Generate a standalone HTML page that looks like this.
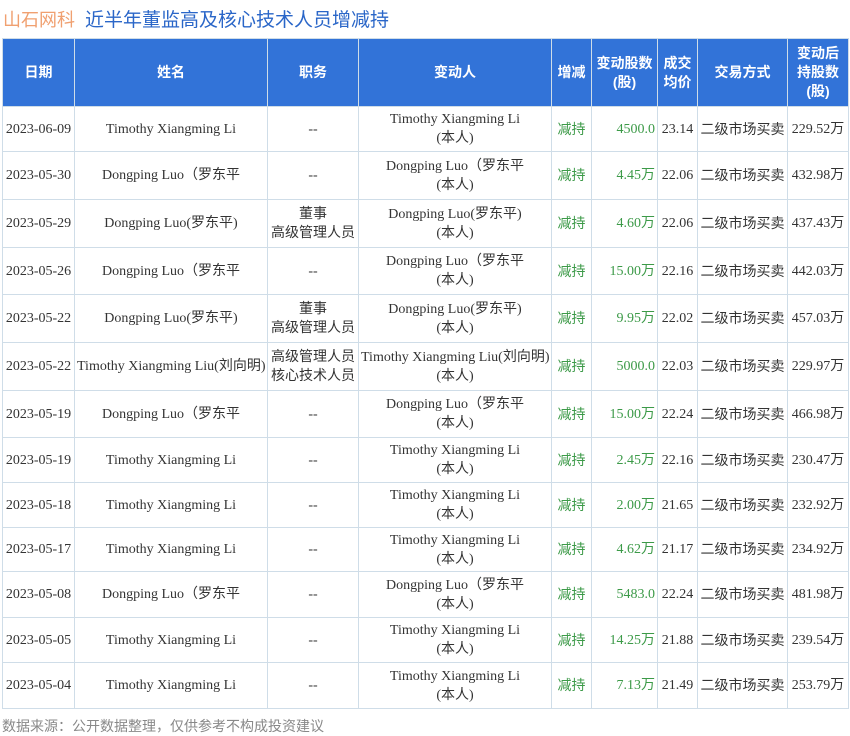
<!DOCTYPE html>
<html><head><meta charset="utf-8"><style>
*{margin:0;padding:0;box-sizing:border-box}
body{width:850px;height:735px;background:#fff;position:relative;overflow:hidden;font-family:"Liberation Serif","Noto Sans CJK SC",serif;color:#333}
.title{position:absolute;left:3px;top:5px;font:19px "Liberation Sans","Noto Sans CJK SC",sans-serif;white-space:nowrap;letter-spacing:0}
.title .a{color:#f0a070;font-size:18px}.title .b{color:#2a66c8;margin-left:10px}
table{position:absolute;left:2px;top:38px;border-collapse:collapse;table-layout:fixed;width:846px}
td,th{border:1px solid #cfdde8;text-align:center;font-size:14px;line-height:19px;padding:0 2px;white-space:nowrap;overflow:hidden}
th{background:#3273d8;color:#fff;font-family:"Liberation Sans","Noto Sans CJK SC",sans-serif;font-weight:bold;height:68px;border-color:#cfdde8}
td.g{color:#3c9a48;font-family:"Liberation Sans","Noto Sans CJK SC",sans-serif}
td.n{color:#3c9a48;text-align:right}
td.c{font-family:"Liberation Sans","Noto Sans CJK SC",sans-serif}
.foot{position:absolute;left:2px;top:716px;font:14px "Liberation Sans","Noto Sans CJK SC",sans-serif;color:#888;white-space:nowrap}
</style></head><body>
<div class="title"><span class="a">山石网科</span><span class="b">近半年董监高及核心技术人员增减持</span></div>
<table>
<colgroup><col style="width:72px"><col style="width:193px"><col style="width:91px"><col style="width:193px"><col style="width:40px"><col style="width:66px"><col style="width:40px"><col style="width:90px"><col style="width:61px"></colgroup>
<tr><th>日期</th><th>姓名</th><th>职务</th><th>变动人</th><th>增减</th><th>变动股数<br>(股)</th><th>成交<br>均价</th><th>交易方式</th><th>变动后<br>持股数<br>(股)</th></tr>
<tr style="height:45px"><td>2023-06-09</td><td>Timothy Xiangming Li</td><td>--</td><td>Timothy Xiangming Li<br>(本人)</td><td class="g">减持</td><td class="n">4500.0</td><td>23.14</td><td class="c">二级市场买卖</td><td>229.52万</td></tr>
<tr style="height:48px"><td>2023-05-30</td><td>Dongping Luo（罗东平</td><td>--</td><td>Dongping Luo（罗东平<br>(本人)</td><td class="g">减持</td><td class="n">4.45万</td><td>22.06</td><td class="c">二级市场买卖</td><td>432.98万</td></tr>
<tr style="height:48px"><td>2023-05-29</td><td>Dongping Luo(罗东平)</td><td>董事<br>高级管理人员</td><td>Dongping Luo(罗东平)<br>(本人)</td><td class="g">减持</td><td class="n">4.60万</td><td>22.06</td><td class="c">二级市场买卖</td><td>437.43万</td></tr>
<tr style="height:47px"><td>2023-05-26</td><td>Dongping Luo（罗东平</td><td>--</td><td>Dongping Luo（罗东平<br>(本人)</td><td class="g">减持</td><td class="n">15.00万</td><td>22.16</td><td class="c">二级市场买卖</td><td>442.03万</td></tr>
<tr style="height:48px"><td>2023-05-22</td><td>Dongping Luo(罗东平)</td><td>董事<br>高级管理人员</td><td>Dongping Luo(罗东平)<br>(本人)</td><td class="g">减持</td><td class="n">9.95万</td><td>22.02</td><td class="c">二级市场买卖</td><td>457.03万</td></tr>
<tr style="height:48px"><td>2023-05-22</td><td>Timothy Xiangming Liu(刘向明)</td><td>高级管理人员<br>核心技术人员</td><td>Timothy Xiangming Liu(刘向明)<br>(本人)</td><td class="g">减持</td><td class="n">5000.0</td><td>22.03</td><td class="c">二级市场买卖</td><td>229.97万</td></tr>
<tr style="height:47px"><td>2023-05-19</td><td>Dongping Luo（罗东平</td><td>--</td><td>Dongping Luo（罗东平<br>(本人)</td><td class="g">减持</td><td class="n">15.00万</td><td>22.24</td><td class="c">二级市场买卖</td><td>466.98万</td></tr>
<tr style="height:45px"><td>2023-05-19</td><td>Timothy Xiangming Li</td><td>--</td><td>Timothy Xiangming Li<br>(本人)</td><td class="g">减持</td><td class="n">2.45万</td><td>22.16</td><td class="c">二级市场买卖</td><td>230.47万</td></tr>
<tr style="height:45px"><td>2023-05-18</td><td>Timothy Xiangming Li</td><td>--</td><td>Timothy Xiangming Li<br>(本人)</td><td class="g">减持</td><td class="n">2.00万</td><td>21.65</td><td class="c">二级市场买卖</td><td>232.92万</td></tr>
<tr style="height:44px"><td>2023-05-17</td><td>Timothy Xiangming Li</td><td>--</td><td>Timothy Xiangming Li<br>(本人)</td><td class="g">减持</td><td class="n">4.62万</td><td>21.17</td><td class="c">二级市场买卖</td><td>234.92万</td></tr>
<tr style="height:46px"><td>2023-05-08</td><td>Dongping Luo（罗东平</td><td>--</td><td>Dongping Luo（罗东平<br>(本人)</td><td class="g">减持</td><td class="n">5483.0</td><td>22.24</td><td class="c">二级市场买卖</td><td>481.98万</td></tr>
<tr style="height:45px"><td>2023-05-05</td><td>Timothy Xiangming Li</td><td>--</td><td>Timothy Xiangming Li<br>(本人)</td><td class="g">减持</td><td class="n">14.25万</td><td>21.88</td><td class="c">二级市场买卖</td><td>239.54万</td></tr>
<tr style="height:46px"><td>2023-05-04</td><td>Timothy Xiangming Li</td><td>--</td><td>Timothy Xiangming Li<br>(本人)</td><td class="g">减持</td><td class="n">7.13万</td><td>21.49</td><td class="c">二级市场买卖</td><td>253.79万</td></tr>
</table>
<div class="foot">数据来源：公开数据整理，仅供参考不构成投资建议</div>
</body></html>
